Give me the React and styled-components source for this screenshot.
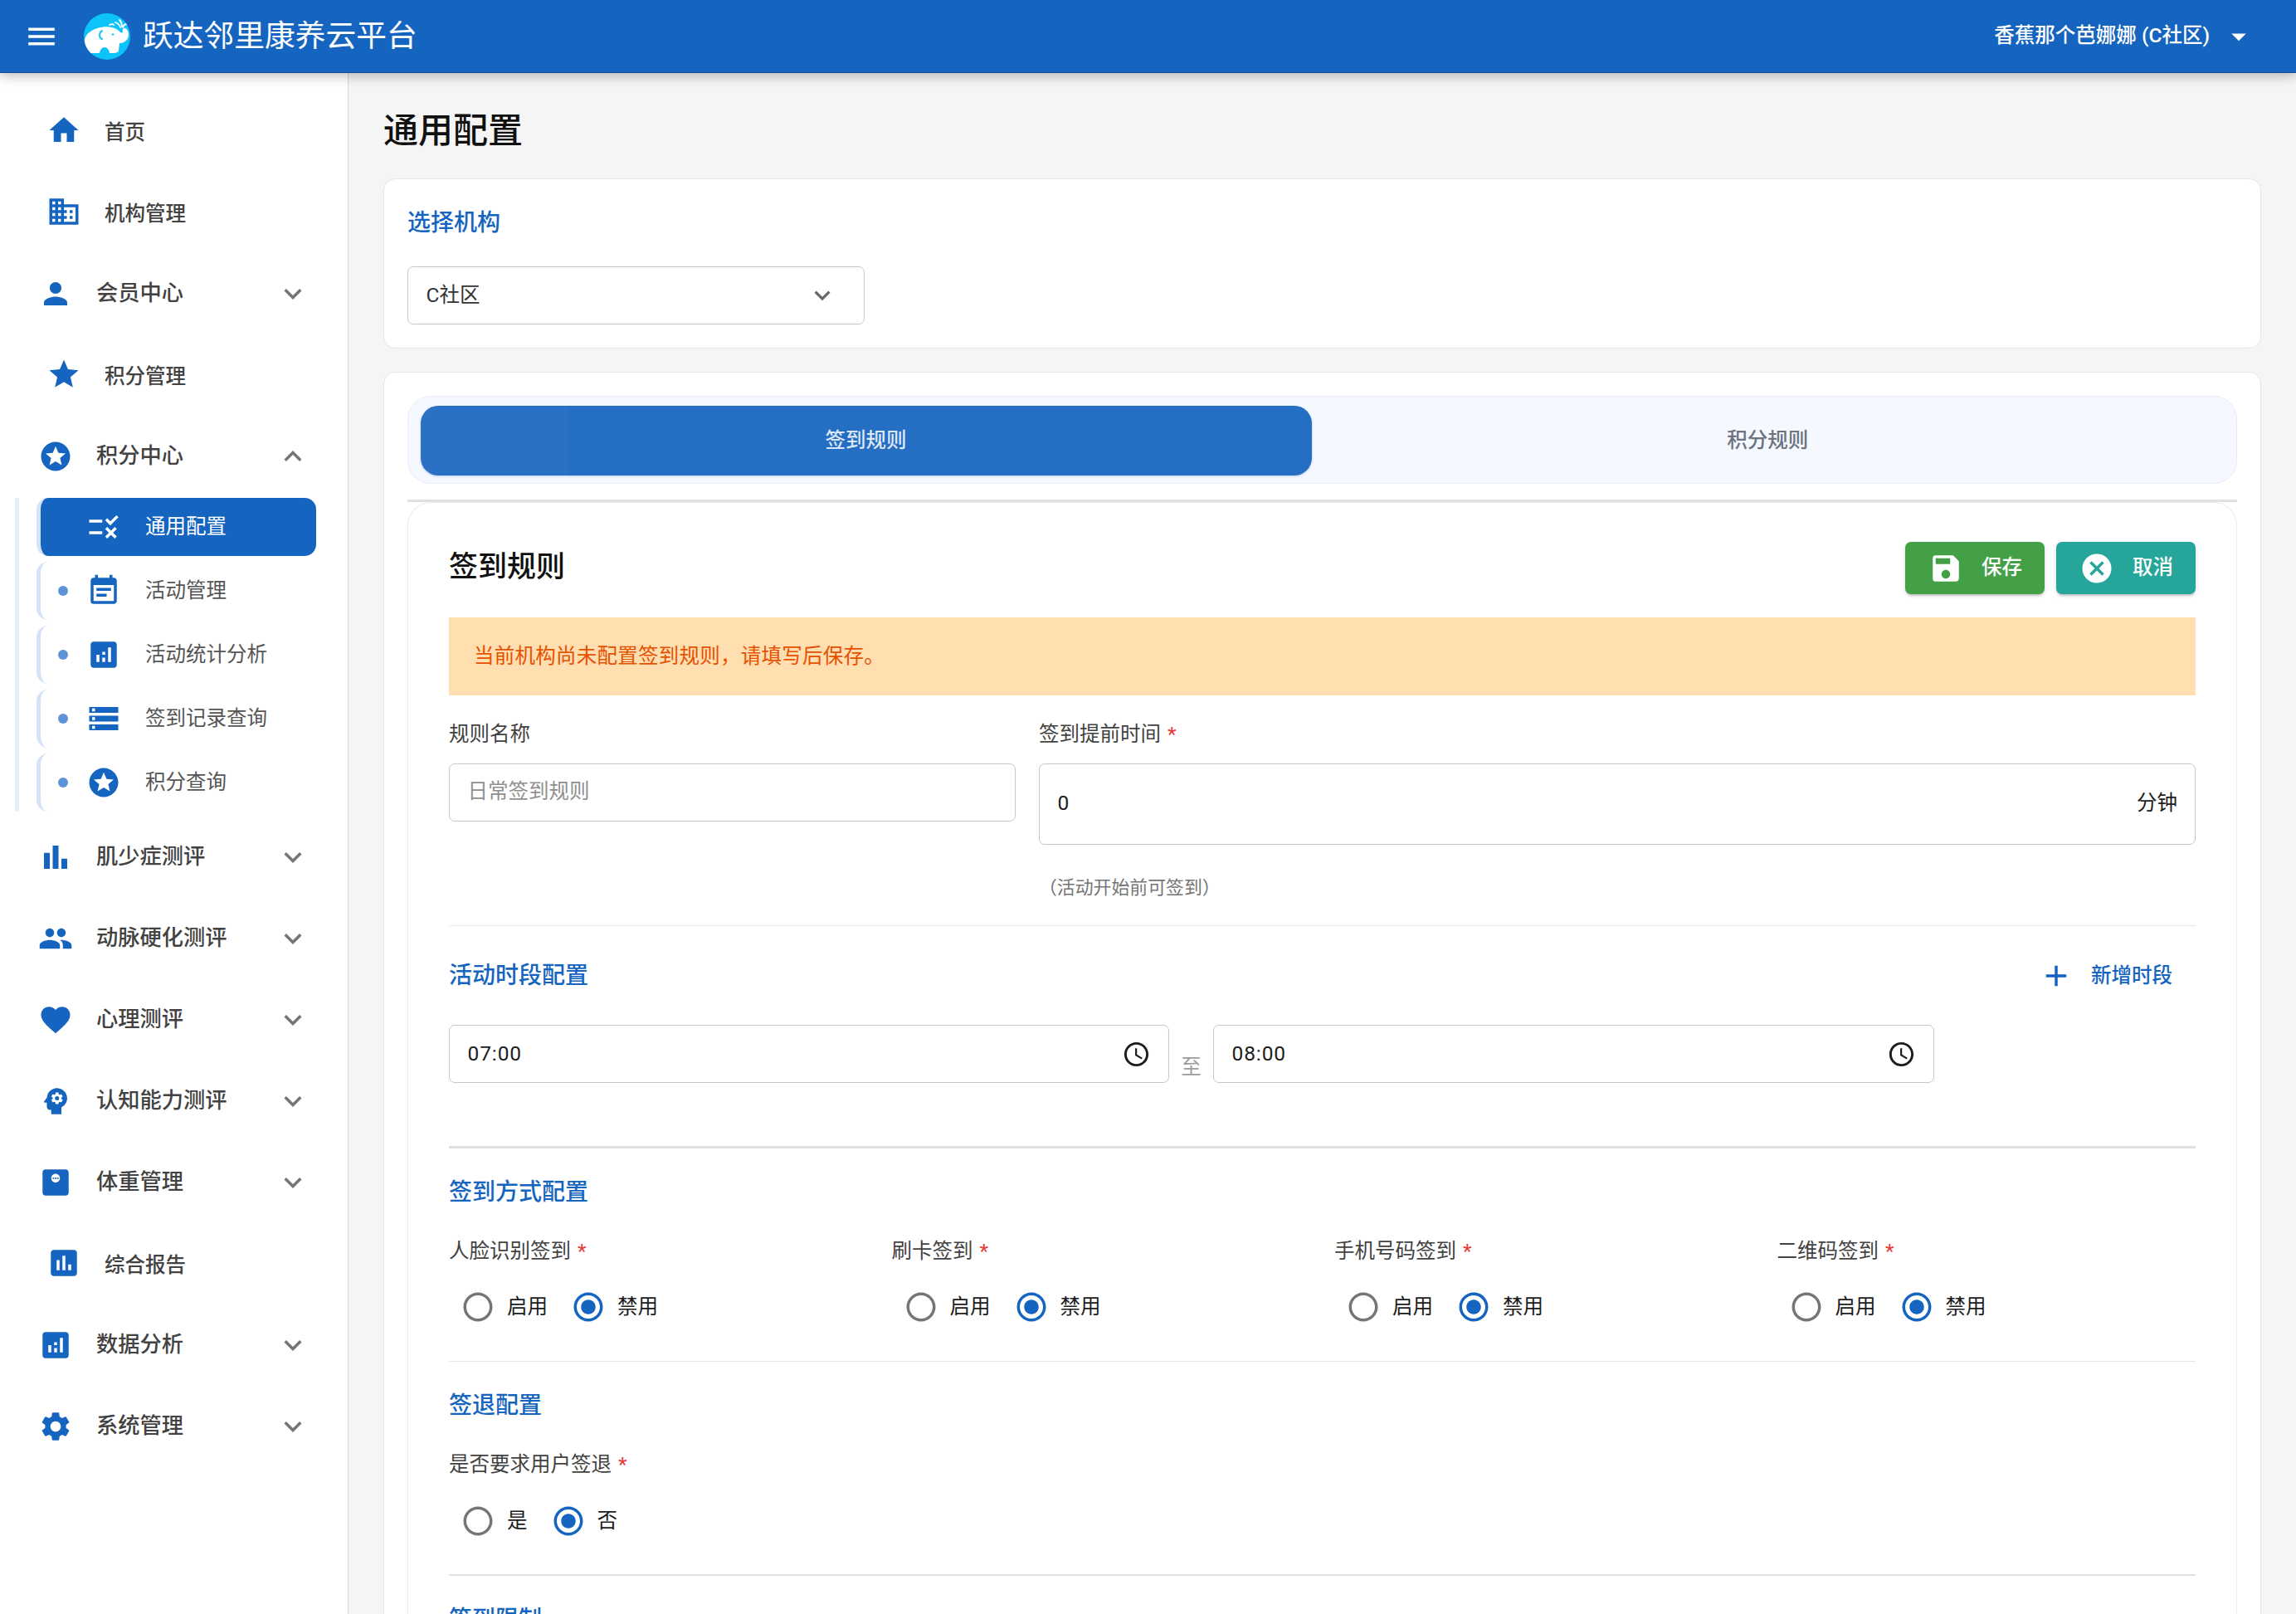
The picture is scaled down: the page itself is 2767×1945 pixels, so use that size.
import React from 'react';
import styled, { createGlobalStyle } from 'styled-components';
import {
  MdAccessTime,
  MdAdd,
  MdAnalytics,
  MdArrowDropDown,
  MdAssessment,
  MdBarChart,
  MdCancel,
  MdDomain,
  MdEventNote,
  MdExpandLess,
  MdExpandMore,
  MdFavorite,
  MdHome,
  MdMenu,
  MdMonitorWeight,
  MdPeople,
  MdPerson,
  MdPsychology,
  MdRadioButtonChecked,
  MdRadioButtonUnchecked,
  MdRule,
  MdSave,
  MdSettings,
  MdStar,
  MdStars,
  MdStorage,
} from 'react-icons/md';

const BLUE = '#1565c0';

const GlobalStyle = createGlobalStyle`
  html, body {
    margin: 0;
    height: 100%;
    overflow: hidden;
    background: #f5f5f5;
  }
  body, input, button {
    font-family: Roboto, "Noto Sans CJK SC", sans-serif;
    line-height: 1.5;
  }
  * {
    box-sizing: border-box;
  }
`;

const Page = styled.div`
  width: 2767px;
  height: 1945px;
  overflow: hidden;
  display: flex;
  flex-direction: column;
`;

const TopBar = styled.header`
  position: relative;
  z-index: 2;
  flex: 0 0 88px;
  display: flex;
  align-items: center;
  padding: 0 48px 0 29px;
  background: ${BLUE};
  border-bottom: 1px solid #0f4c92;
  box-shadow: 0 3px 14px rgba(0, 0, 0, 0.28);
  color: #fff;
`;

const Brand = styled.div`
  margin-left: 30px;
  display: flex;
  align-items: center;
  gap: 15px;
  font-size: 36.75px;
`;

const UserName = styled.div`
  margin-left: auto;
  display: flex;
  align-items: center;
  gap: 14px;
  font-size: 24.5px;
  font-weight: 500;
`;

const Body = styled.div`
  flex: 1;
  min-height: 0;
  display: flex;
`;

const Sidebar = styled.nav`
  flex: 0 0 420px;
  padding-top: 20px;
  background: #fff;
  border-right: 1px solid #d6d6d6;
`;

const Row = styled.div`
  height: 98px;
  display: flex;
  align-items: center;
  gap: 28px;
  padding: ${(p) => (p.$flat ? 0 : 2)}px 45px 0 ${(p) => (p.$flat ? 56 : 46)}px;
  font-size: ${(p) => (p.$flat ? 24.5 : 26.25)}px;
  line-height: ${(p) => (p.$flat ? 'normal' : 1.5)};
  font-weight: 500;
  color: #424242;

  > svg:first-child {
    flex: none;
    color: ${BLUE};
  }
`;

const Chevron = styled.span`
  margin-left: auto;
  display: flex;
  color: #757575;
`;

const SubMenu = styled.div`
  margin: 2px 0 5px 18px;
  padding-left: 21px;
  border-left: 5px solid #e6eefc;
  display: flex;
  flex-direction: column;
  gap: 7px;
`;

const SubItem = styled.div`
  width: 337px;
  height: 70px;
  display: flex;
  align-items: center;
  padding-left: 21px;
  border-left: 5px solid #d6e2f8;
  border-radius: 14px;
  font-size: 24.5px;
  color: ${(p) => (p.$active ? '#fff' : '#555')};
  background: ${(p) => (p.$active ? BLUE : 'transparent')};

  > svg {
    flex: none;
    margin: 0 29px 0 22px;
    color: ${(p) => (p.$active ? '#fff' : BLUE)};
  }
`;

const Dot = styled.i`
  flex: none;
  width: 12px;
  height: 12px;
  border-radius: 50%;
  background: ${(p) => (p.$hidden ? 'transparent' : '#5e94d6')};
`;

const Main = styled.main`
  flex: 1;
  min-width: 0;
  padding: 38px 42px 0;
  overflow: hidden;
`;

const PageTitle = styled.h1`
  margin: 0 0 26px;
  font-size: 42px;
  line-height: 63px;
  font-weight: 500;
  color: #111;
`;

const Card = styled.section`
  padding: 28px;
  margin-bottom: 28px;
  background: #fff;
  border: 1px solid #e6e6e6;
  border-radius: 14px;
`;

const SectionTitle = styled.h2`
  margin: 0;
  font-size: 28px;
  line-height: 46px;
  font-weight: 500;
  color: ${BLUE};
`;

const FieldBox = styled.div`
  height: ${(p) => p.$height || 70}px;
  width: ${(p) => (p.$width ? `${p.$width}px` : 'auto')};
  display: flex;
  align-items: center;
  justify-content: space-between;
  padding: 0 ${(p) => p.$right ?? 21}px 0 21.5px;
  border: 1px solid #c6c6c6;
  border-radius: 7px;
  background: #fff;
  font-size: 24.5px;
  color: ${(p) => (p.$placeholder ? '#8f8f8f' : '#1c1c1c')};
  letter-spacing: ${(p) => (p.$time ? 0.9 : 0)}px;
`;

const OrgSelect = styled(FieldBox)`
  margin-top: 29px;
  padding-right: 31px;
  color: #333;

  svg {
    color: #666;
  }
`;

const CardTitle = styled(SectionTitle)`
  margin-top: 2px;
`;

const TabBar = styled.div`
  height: 106px;
  display: flex;
  padding: 11px 15px 9px 14.5px;
  background: #f5f8ff;
  border: 1px solid #e8ecf6;
  border-radius: 28px;
`;

const Tab = styled.div`
  flex: ${(p) => (p.$active ? '0 0 1074px' : 1)};
  display: flex;
  align-items: center;
  justify-content: center;
  border-radius: 21px;
  font-size: 24.5px;
  font-weight: 500;
  color: ${(p) => (p.$active ? 'rgba(255, 255, 255, 0.85)' : '#6b7280')};
  background: ${(p) =>
    p.$active ? 'linear-gradient(90deg, #2a71c6 0 178px, #246ec4 178px)' : 'transparent'};
  box-shadow: ${(p) => (p.$active ? '0 1px 3px rgba(21, 101, 192, 0.25)' : 'none')};
`;

const PanelDivider = styled.div`
  height: 3px;
  margin-top: 19px;
  background: #e0e0e0;
`;

const Panel = styled.div`
  padding: 47px 49px 0;
  border: 1px solid #e8ecf6;
  border-bottom: 0;
  border-radius: 28px 28px 0 0;
`;

const PanelHead = styled.div`
  height: 63px;
  display: flex;
  align-items: center;
  justify-content: space-between;
`;

const PanelTitle = styled.h2`
  margin: 0;
  font-size: 35px;
  font-weight: 500;
  color: #111;
`;

const Actions = styled.div`
  display: flex;
  gap: 14px;
`;

const ActionButton = styled.button`
  width: 168px;
  height: 63px;
  display: flex;
  align-items: center;
  gap: 22px;
  padding: 0 0 0 28px;
  border: 0;
  border-radius: 7px;
  background: ${(p) => p.$color};
  box-shadow: 0 3px 3px -2px rgba(0, 0, 0, 0.2), 0 2px 4px rgba(0, 0, 0, 0.16);
  color: #fff;
  font-size: 24.5px;
  font-weight: 500;
`;

const Alert = styled.div`
  margin-top: 28px;
  height: 94px;
  display: flex;
  align-items: center;
  padding-left: 30px;
  background: #ffdeb0;
  color: #e65100;
  font-size: 24.5px;
  letter-spacing: 0.25px;
`;

const RuleGrid = styled.div`
  margin-top: 28px;
  display: grid;
  grid-template-columns: 683px 1fr;
  column-gap: 28px;
  align-items: start;
`;

const Label = styled.label`
  display: block;
  height: 38px;
  line-height: 38px;
  font-size: 24.5px;
  color: #424242;

  & + ${FieldBox} {
    margin-top: 15.5px;
  }
`;

const Required = styled.span`
  margin-left: 8px;
  color: #e53935;
`;

const Helper = styled.div`
  margin-top: 38.5px;
  height: 28px;
  line-height: 28px;
  font-size: 21.875px;
  color: #757575;
`;

const Divider = styled.hr`
  margin: ${(p) => p.$top}px 0 0;
  border: 0;
  height: ${(p) => p.$size || 1}px;
  background: ${(p) => (p.$size ? '#e0e0e0' : '#e8e8e8')};
`;

const Section = styled.div`
  padding-top: ${(p) => p.$top || 30}px;
`;

const TitleRow = styled.div`
  display: flex;
  align-items: center;
  justify-content: space-between;
`;

const AddLink = styled.button`
  display: flex;
  align-items: center;
  gap: 21px;
  padding: 0 28px 0 0;
  border: 0;
  background: none;
  color: ${BLUE};
  font-size: 24.5px;
  font-weight: 500;
`;

const TimeRow = styled.div`
  margin-top: 36px;
  display: flex;
  align-items: flex-end;
`;

const To = styled.span`
  width: 53px;
  text-align: center;
  line-height: 38px;
  font-size: 24.5px;
  color: #9e9e9e;
`;

const MethodGrid = styled.div`
  margin-top: 29px;
  display: grid;
  grid-template-columns: repeat(4, 533.5px);
`;

const RadioRow = styled.div`
  margin-top: ${(p) => p.$top || 13}px;
  height: 70px;
  display: flex;
  align-items: center;
  gap: 28px;
  padding-left: 14px;
`;

const RadioOption = styled.span`
  display: flex;
  align-items: center;
  gap: 14px;
  font-size: 24.5px;
  color: #1c1c1c;

  svg {
    color: ${(p) => (p.$on ? BLUE : '#757575')};
  }
`;

const CheckoutLabel = styled(Label)`
  margin-top: 29px;
`;

const menuTop = [
  { icon: MdHome, label: '首页', flat: true },
  { icon: MdDomain, label: '机构管理', flat: true },
  { icon: MdPerson, label: '会员中心' },
  { icon: MdStar, label: '积分管理', flat: true },
  { icon: MdStars, label: '积分中心', open: true },
];

const subMenu = [
  { icon: MdRule, label: '通用配置', active: true },
  { icon: MdEventNote, label: '活动管理' },
  { icon: MdAnalytics, label: '活动统计分析' },
  { icon: MdStorage, label: '签到记录查询' },
  { icon: MdStars, label: '积分查询' },
];

const menuBottom = [
  { icon: MdBarChart, label: '肌少症测评' },
  { icon: MdPeople, label: '动脉硬化测评' },
  { icon: MdFavorite, label: '心理测评' },
  { icon: MdPsychology, label: '认知能力测评' },
  { icon: MdMonitorWeight, label: '体重管理' },
  { icon: MdAssessment, label: '综合报告', flat: true },
  { icon: MdAnalytics, label: '数据分析' },
  { icon: MdSettings, label: '系统管理' },
];

const methods = ['人脸识别签到', '刷卡签到', '手机号码签到', '二维码签到'];

const Logo = () => (
  <svg width="56" height="56" viewBox="0 0 56 56">
    <defs>
      <clipPath id="logo-clip">
        <circle cx="28" cy="28" r="28" />
      </clipPath>
    </defs>
    <circle cx="28" cy="28" r="28" fill="#0cc4fa" />
    <g clipPath="url(#logo-clip)">
      <path
        fill="#fff"
        d="M2 44C-1 35 1 26 8 22c7-5 18-7 26-5 4 1 8 3 10 6 2 1 3 0 3-2-1-2 1-4 3-3 4 2 5 8 3 12-2 4-6 6-10 6l-1 9c0 2-3 3-7 3H7c-3 0-4-2-5-4z"
      />
      <path fill="#0cc4fa" d="M19 49c0-5 3-8 6-8s6 3 6 8z" />
      <path d="M22 21c-4 3-4 8 0 10" fill="none" stroke="#0cc4fa" strokeWidth="2" strokeLinecap="round" />
      <circle cx="35" cy="25.5" r="1.2" fill="#0cc4fa" />
      <path
        d="M44 17c-1-3-3-5-6-6M46 16c0-4-1-6-3-8M47 17c1-3 3-4 5-4M36 14c-1-1-3-1-5 0"
        fill="none"
        stroke="#fff"
        strokeWidth="1.8"
        strokeLinecap="round"
      />
    </g>
  </svg>
);

const MenuRow = ({ item }) => {
  const Icon = item.icon;
  return (
    <Row $flat={item.flat}>
      <Icon size={42} />
      {item.label}
      {!item.flat && <Chevron>{item.open ? <MdExpandLess size={42} /> : <MdExpandMore size={42} />}</Chevron>}
    </Row>
  );
};

const Radio = ({ on, children }) => (
  <RadioOption $on={on}>
    {on ? <MdRadioButtonChecked size={42} /> : <MdRadioButtonUnchecked size={42} />}
    {children}
  </RadioOption>
);

const App = () => {
  return (
    <Page>
      <GlobalStyle />
      <TopBar>
        <MdMenu size={42} />
        <Brand>
          <Logo />
          跃达邻里康养云平台
        </Brand>
        <UserName>
          香蕉那个芭娜娜 (C社区)
          <MdArrowDropDown size={42} />
        </UserName>
      </TopBar>

      <Body>
        <Sidebar>
          {menuTop.map((item) => (
            <MenuRow key={item.label} item={item} />
          ))}
          <SubMenu>
            {subMenu.map((item) => {
              const Icon = item.icon;
              return (
                <SubItem key={item.label} $active={item.active}>
                  <Dot $hidden={item.active} />
                  <Icon size={42} />
                  {item.label}
                </SubItem>
              );
            })}
          </SubMenu>
          {menuBottom.map((item) => (
            <MenuRow key={item.label} item={item} />
          ))}
        </Sidebar>

        <Main>
          <PageTitle>通用配置</PageTitle>

          <Card>
            <CardTitle>选择机构</CardTitle>
            <OrgSelect $width={551}>
              C社区
              <MdExpandMore size={38} />
            </OrgSelect>
          </Card>

          <Card>
            <TabBar>
              <Tab $active>签到规则</Tab>
              <Tab>积分规则</Tab>
            </TabBar>
            <PanelDivider />
            <Panel>
              <PanelHead>
                <PanelTitle>签到规则</PanelTitle>
                <Actions>
                  <ActionButton $color="#43a047">
                    <MdSave size={42} />
                    保存
                  </ActionButton>
                  <ActionButton $color="#26a69a">
                    <MdCancel size={42} />
                    取消
                  </ActionButton>
                </Actions>
              </PanelHead>

              <Alert>当前机构尚未配置签到规则，请填写后保存。</Alert>

              <RuleGrid>
                <div>
                  <Label>规则名称</Label>
                  <FieldBox $placeholder>日常签到规则</FieldBox>
                </div>
                <div>
                  <Label>
                    签到提前时间<Required>*</Required>
                  </Label>
                  <FieldBox $height={98}>
                    0<span>分钟</span>
                  </FieldBox>
                  <Helper>（活动开始前可签到）</Helper>
                </div>
              </RuleGrid>

              <Divider $top={31} />

              <Section $top={37}>
                <TitleRow>
                  <SectionTitle>活动时段配置</SectionTitle>
                  <AddLink>
                    <MdAdd size={42} />
                    新增时段
                  </AddLink>
                </TitleRow>
                <TimeRow>
                  <FieldBox $width={868} $time>
                    07:00
                    <MdAccessTime size={35} />
                  </FieldBox>
                  <To>至</To>
                  <FieldBox $width={869} $time>
                    08:00
                    <MdAccessTime size={35} />
                  </FieldBox>
                </TimeRow>
              </Section>

              <Divider $top={76} $size={3} />

              <Section>
                <SectionTitle>签到方式配置</SectionTitle>
                <MethodGrid>
                  {methods.map((name) => (
                    <div key={name}>
                      <Label>
                        {name}
                        <Required>*</Required>
                      </Label>
                      <RadioRow>
                        <Radio>启用</Radio>
                        <Radio on>禁用</Radio>
                      </RadioRow>
                    </div>
                  ))}
                </MethodGrid>
              </Section>

              <Divider $top={30} />

              <Section>
                <SectionTitle>签退配置</SectionTitle>
                <CheckoutLabel>
                  是否要求用户签退<Required>*</Required>
                </CheckoutLabel>
                <RadioRow $top={14}>
                  <Radio>是</Radio>
                  <Radio on>否</Radio>
                </RadioRow>
              </Section>

              <Divider $top={29} $size={2} />

              <Section>
                <SectionTitle>签到限制</SectionTitle>
              </Section>
            </Panel>
          </Card>
        </Main>
      </Body>
    </Page>
  );
};

export default App;
